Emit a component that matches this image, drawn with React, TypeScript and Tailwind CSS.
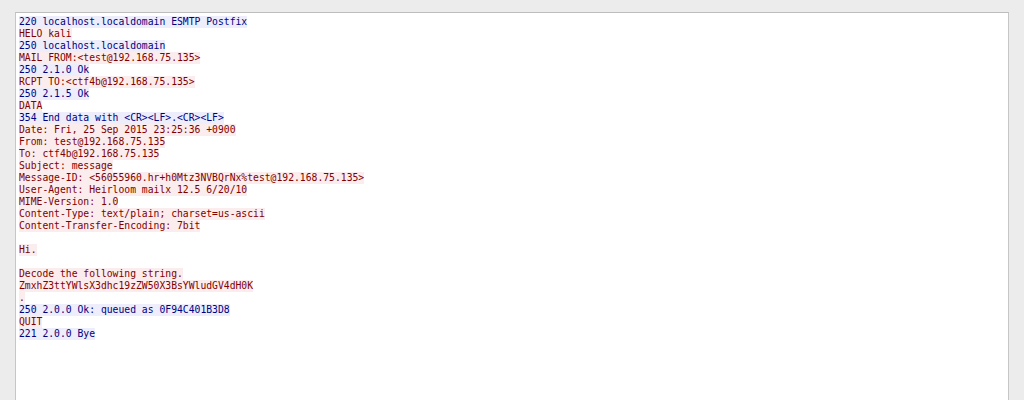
import React from "react";

type Line = { t: string; s: "c" | "s" | "b" };

const lines: Line[] = [
  { t: "220 localhost.localdomain ESMTP Postfix", s: "s" },
  { t: "HELO kali", s: "c" },
  { t: "250 localhost.localdomain", s: "s" },
  { t: "MAIL FROM:<test@192.168.75.135>", s: "c" },
  { t: "250 2.1.0 Ok", s: "s" },
  { t: "RCPT TO:<ctf4b@192.168.75.135>", s: "c" },
  { t: "250 2.1.5 Ok", s: "s" },
  { t: "DATA", s: "c" },
  { t: "354 End data with <CR><LF>.<CR><LF>", s: "s" },
  { t: "Date: Fri, 25 Sep 2015 23:25:36 +0900", s: "c" },
  { t: "From: test@192.168.75.135", s: "c" },
  { t: "To: ctf4b@192.168.75.135", s: "c" },
  { t: "Subject: message", s: "c" },
  { t: "Message-ID: <56055960.hr+h0Mtz3NVBQrNx%test@192.168.75.135>", s: "c" },
  { t: "User-Agent: Heirloom mailx 12.5 6/20/10", s: "c" },
  { t: "MIME-Version: 1.0", s: "c" },
  { t: "Content-Type: text/plain; charset=us-ascii", s: "c" },
  { t: "Content-Transfer-Encoding: 7bit", s: "c" },
  { t: "", s: "b" },
  { t: "Hi.", s: "c" },
  { t: "", s: "b" },
  { t: "Decode the following string.", s: "c" },
  { t: "ZmxhZ3ttYWlsX3dhc19zZW50X3BsYWludGV4dH0K", s: "c" },
  { t: ".", s: "c" },
  { t: "250 2.0.0 Ok: queued as 0F94C401B3D8", s: "s" },
  { t: "QUIT", s: "c" },
  { t: "221 2.0.0 Bye", s: "s" },
];

export default function App() {
  return (
    <div className="w-[1024px] h-[400px] overflow-hidden bg-[#ececec] pt-[12px] pl-[15px] pr-[15px]">
      <div className="h-[400px] bg-white border border-[#c6c6c6] border-t-[#bdbdbd] pt-[3px] pl-[3px]">
        <div
          className="text-[9.72px] leading-[12px] whitespace-pre"
          style={{ fontFamily: '"DejaVu Sans Mono", "Liberation Mono", monospace' }}
        >
          {lines.map((l, i) =>
            l.s === "b" ? (
              <div key={i} className="h-[12px]" />
            ) : (
              <div key={i} className="h-[12px]">
                <span
                  className={
                    l.s === "c"
                      ? "inline-block h-[12px] bg-[#fbeded] text-[#7f0000]"
                      : "inline-block h-[12px] bg-[#ededfb] text-[#00007f]"
                  }
                >
                  {l.t}
                </span>
              </div>
            )
          )}
        </div>
      </div>
    </div>
  );
}
